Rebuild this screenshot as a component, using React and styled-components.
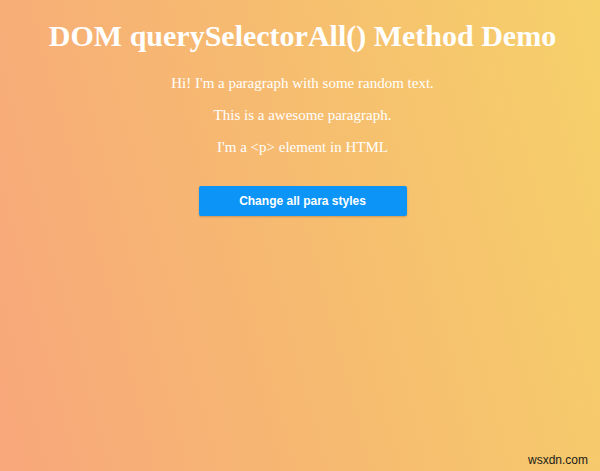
import React from "react";
import styled, { createGlobalStyle } from "styled-components";

const GlobalStyle = createGlobalStyle`
  html, body {
    margin: 0;
    padding: 0;
  }
  body {
    font-family: "Liberation Serif", "Times New Roman", serif;
  }
`;

const Page = styled.div`
  position: relative;
  box-sizing: border-box;
  width: 600px;
  height: 471px;
  padding-left: 5px;
  overflow: hidden;
  background: linear-gradient(75deg, #f8a77b 0%, #f6bb70 50%, #f6d16a 100%);
  display: flex;
  flex-direction: column;
  align-items: center;
  color: #fff;
`;

const Title = styled.h1`
  margin: 18px 0 0;
  font-size: 30px;
  font-weight: bold;
  line-height: 36px;
`;

const Para = styled.p`
  margin: 0;
  font-size: 15px;
  line-height: 32px;
  &:first-of-type {
    margin-top: 13px;
  }
`;

const Button = styled.button`
  margin-top: 23px;
  width: 208px;
  height: 30px;
  border: none;
  border-radius: 2px;
  background: #0d94f7;
  color: #fff;
  font-family: "Liberation Sans", Arial, sans-serif;
  font-size: 12px;
  font-weight: bold;
  box-shadow: 0 1px 2px rgba(120, 80, 40, 0.35);
  cursor: pointer;
`;

const Watermark = styled.span`
  position: absolute;
  right: 12px;
  bottom: 4px;
  font-family: "Liberation Sans", Arial, sans-serif;
  font-size: 12px;
  color: #201c18;
`;

export default function App() {
  return (
    <>
      <GlobalStyle />
      <Page>
        <Title>DOM querySelectorAll() Method Demo</Title>
        <Para>Hi! I'm a paragraph with some random text.</Para>
        <Para>This is a awesome paragraph.</Para>
        <Para>I'm a &lt;p&gt; element in HTML</Para>
        <Button>Change all para styles</Button>
        <Watermark>wsxdn.com</Watermark>
      </Page>
    </>
  );
}
